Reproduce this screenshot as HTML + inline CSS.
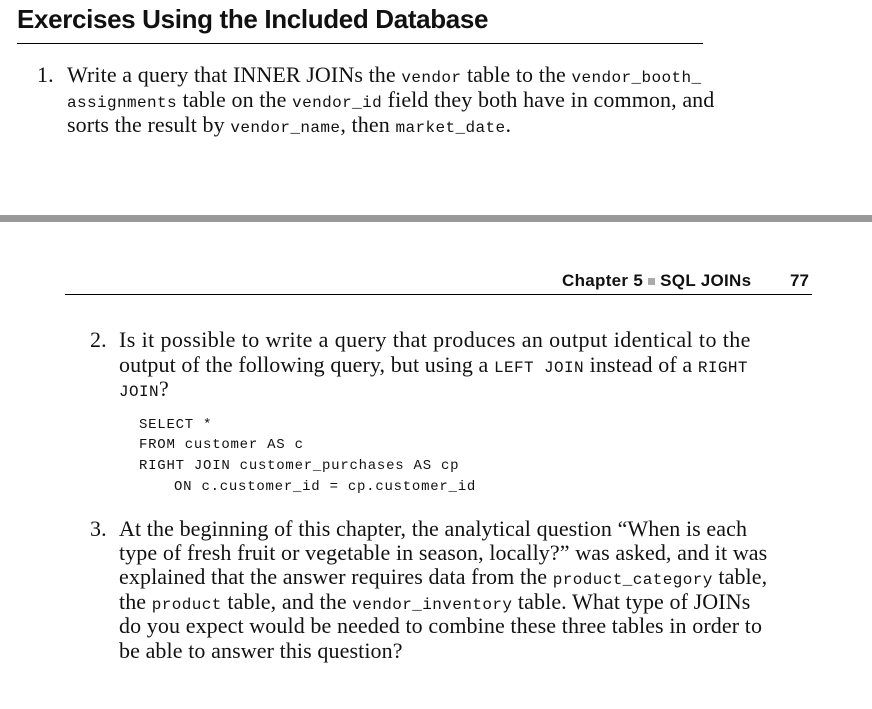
<!DOCTYPE html>
<html><head><meta charset="utf-8"><style>
body{margin:0;width:872px;height:709px;background:#fff;position:relative;overflow:hidden;color:#111}
.a{position:absolute;white-space:nowrap}
.s{font-family:"Liberation Serif",serif;font-size:22px;letter-spacing:0.1px}
.m{font-family:"Liberation Mono",monospace;font-size:16px;letter-spacing:0.4px}
.c{font-family:"Liberation Mono",monospace;font-size:14px;letter-spacing:0.75px}
.h{font-family:"Liberation Sans",sans-serif;font-weight:bold}
</style></head><body>
<div class="a h" style="left:17px;top:4px;font-size:26px;letter-spacing:-0.35px">Exercises Using the Included Database</div>
<div class="a" style="left:17px;top:43px;width:686px;height:1px;background:#000"></div>

<div class="a s" style="left:37px;top:62px">1.</div>
<div class="a s" style="left:67px;top:62px">Write a query that INNER JOINs the <span class="m">vendor</span> table to the <span class="m">vendor_booth_</span></div>
<div class="a s" style="left:67px;top:87px"><span class="m">assignments</span> table on the <span class="m">vendor_id</span> field they both have in common, and</div>
<div class="a s" style="left:67px;top:112px">sorts the result by <span class="m">vendor_name</span>, then <span class="m">market_date</span>.</div>

<div class="a" style="left:0;top:215px;width:872px;height:7px;background:#999"></div>

<div class="a h" style="left:562px;top:271px;font-size:17px;letter-spacing:0.3px">Chapter 5 <span style="display:inline-block;width:7px;height:7px;background:#aaa;vertical-align:1px"></span> SQL JOINs</div>
<div class="a h" style="left:790px;top:271px;font-size:17px">77</div>
<div class="a" style="left:65px;top:294px;width:747px;height:1px;background:#000"></div>

<div class="a s" style="left:90px;top:327px">2.</div>
<div class="a s" style="left:119px;top:327px;letter-spacing:0.4px">Is it possible to write a query that produces an output identical to the</div>
<div class="a s" style="left:119px;top:352px">output of the following query, but using a <span class="m">LEFT JOIN</span> instead of a <span class="m">RIGHT</span></div>
<div class="a s" style="left:119px;top:376px"><span class="m">JOIN</span>?</div>

<div class="a c" style="left:139px;top:417px">SELECT *</div>
<div class="a c" style="left:139px;top:437px">FROM customer AS c</div>
<div class="a c" style="left:139px;top:458px">RIGHT JOIN customer_purchases AS cp</div>
<div class="a c" style="left:174px;top:479px">ON c.customer_id = cp.customer_id</div>

<div class="a s" style="left:90px;top:516px">3.</div>
<div class="a s" style="left:119px;top:516px">At the beginning of this chapter, the analytical question “When is each</div>
<div class="a s" style="left:119px;top:540px">type of fresh fruit or vegetable in season, locally?” was asked, and it was</div>
<div class="a s" style="left:119px;top:564px">explained that the answer requires data from the <span class="m">product_category</span> table,</div>
<div class="a s" style="left:119px;top:589px">the <span class="m">product</span> table, and the <span class="m">vendor_inventory</span> table. What type of JOINs</div>
<div class="a s" style="left:119px;top:613px">do you expect would be needed to combine these three tables in order to</div>
<div class="a s" style="left:119px;top:638px">be able to answer this question?</div>
</body></html>
